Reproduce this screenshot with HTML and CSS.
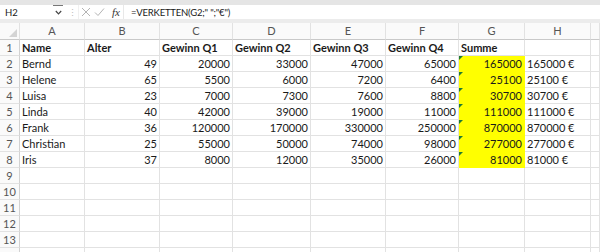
FILE: index.html
```html
<!DOCTYPE html>
<html>
  <head>
    <meta charset="utf-8">
    <title>Mappe1 - Excel</title>
    <link rel="stylesheet" href="styles.css">
  </head>
  <body>
    <div class="ribbon-edge"></div>
    <div class="formula-bar">
      <div class="name-box">
        <span class="ref">H2</span>
        <span class="drop">
          <svg width="7" height="5" viewBox="0 0 7 5"><polyline points="0.8,1 3.5,3.8 6.2,1" fill="none" stroke="#444" stroke-width="1.2"/></svg>
        </span>
      </div>
      <div class="grip">&#8942;</div>
      <div class="fx-buttons">
        <svg class="icon" width="10" height="10" viewBox="0 0 10 10"><path d="M1 1L9 9M9 1L1 9" stroke="#b4b4b4" stroke-width="1"/></svg>
        <svg class="icon" width="11" height="10" viewBox="0 0 11 10"><polyline points="1,5.5 4,8.5 10,1.5" fill="none" stroke="#b4b4b4" stroke-width="1"/></svg>
        <span class="fx">fx</span>
      </div>
      <div class="formula">=VERKETTEN(G2;" ";"€")</div>
    </div>
    <div class="bar-gap"></div>

    <div class="sheet">
      <div class="row head">
        <div class="corner"></div>
        <div>A</div><div>B</div><div>C</div><div>D</div><div>E</div><div>F</div><div>G</div><div>H</div><div></div>
      </div>
      <div class="row bold">
        <div class="rn">1</div>
        <div>Name</div><div>Alter</div><div>Gewinn Q1</div><div>Gewinn Q2</div><div>Gewinn Q3</div><div>Gewinn Q4</div><div>Summe</div><div></div><div></div>
      </div>
      <div class="row">
        <div class="rn">2</div>
        <div>Bernd</div><div class="n">49</div><div class="n">20000</div><div class="n">33000</div><div class="n">47000</div><div class="n">65000</div><div class="n y">165000</div><div>165000 €</div><div></div>
      </div>
      <div class="row">
        <div class="rn">3</div>
        <div>Helene</div><div class="n">65</div><div class="n">5500</div><div class="n">6000</div><div class="n">7200</div><div class="n">6400</div><div class="n y">25100</div><div>25100 €</div><div></div>
      </div>
      <div class="row">
        <div class="rn">4</div>
        <div>Luisa</div><div class="n">23</div><div class="n">7000</div><div class="n">7300</div><div class="n">7600</div><div class="n">8800</div><div class="n y">30700</div><div>30700 €</div><div></div>
      </div>
      <div class="row">
        <div class="rn">5</div>
        <div>Linda</div><div class="n">40</div><div class="n">42000</div><div class="n">39000</div><div class="n">19000</div><div class="n">11000</div><div class="n y">111000</div><div>111000 €</div><div></div>
      </div>
      <div class="row">
        <div class="rn">6</div>
        <div>Frank</div><div class="n">36</div><div class="n">120000</div><div class="n">170000</div><div class="n">330000</div><div class="n">250000</div><div class="n y">870000</div><div>870000 €</div><div></div>
      </div>
      <div class="row">
        <div class="rn">7</div>
        <div>Christian</div><div class="n">25</div><div class="n">55000</div><div class="n">50000</div><div class="n">74000</div><div class="n">98000</div><div class="n y">277000</div><div>277000 €</div><div></div>
      </div>
      <div class="row">
        <div class="rn">8</div>
        <div>Iris</div><div class="n">37</div><div class="n">8000</div><div class="n">12000</div><div class="n">35000</div><div class="n">26000</div><div class="n y">81000</div><div>81000 €</div><div></div>
      </div>
      <div class="row">
        <div class="rn">9</div>
        <div></div><div></div><div></div><div></div><div></div><div></div><div></div><div></div><div></div>
      </div>
      <div class="row">
        <div class="rn">10</div>
        <div></div><div></div><div></div><div></div><div></div><div></div><div></div><div></div><div></div>
      </div>
      <div class="row">
        <div class="rn">11</div>
        <div></div><div></div><div></div><div></div><div></div><div></div><div></div><div></div><div></div>
      </div>
      <div class="row">
        <div class="rn">12</div>
        <div></div><div></div><div></div><div></div><div></div><div></div><div></div><div></div><div></div>
      </div>
      <div class="row">
        <div class="rn">13</div>
        <div></div><div></div><div></div><div></div><div></div><div></div><div></div><div></div><div></div>
      </div>
      <div class="row">
        <div class="rn"></div>
        <div></div><div></div><div></div><div></div><div></div><div></div><div></div><div></div><div></div>
      </div>
    </div>
  </body>
</html>
```

FILE: styles.css
```css
body {
  margin:0;
  overflow:hidden;
  background:#fff;
  color:#1a1a1a;
  font-family:Lato, "Liberation Sans", sans-serif;
}
.ribbon-edge {
  height:5px;
  background:#e5e5e5;
}
.formula-bar {
  display:flex;
  align-items:center;
  height:14px;
  background:#fff;
  font-size:9.5px;
}
.name-box {
  width:66px;
  height:100%;
  box-sizing:border-box;
  display:flex;
  align-items:center;
  justify-content:space-between;
  padding-left:5px;
}
.drop {
  width:10px;
  height:100%;
  box-sizing:border-box;
  border-top:1px solid #777;
  display:flex;
  align-items:center;
  justify-content:center;
  margin-right:3px;
}
.grip {
  width:12px;
  text-align:center;
  color:#bbb;
  font-size:9px;
}
.fx-buttons {
  width:46px;
  height:100%;
  box-sizing:border-box;
  display:flex;
  align-items:center;
  gap:3px;
  padding-left:2px;
  border-left:1px solid #f0f0f0;
  border-right:1px solid #e8e8e8;
}
.fx {
  font-family:"Liberation Serif", serif;
  font-style:italic;
  font-size:11px;
  color:#333;
  margin-left:4px;
}
.formula {
  padding-left:7px;
  letter-spacing:-0.2px;
}
.bar-gap {
  height:4px;
  background:#ececec;
}

.row {
  display:grid;
  grid-template-columns:20px 65px 75px 73px 78px 75px 73px 66px 66px 1fr;
  height:16px;
  font-size:11px;
}
.row > div {
  box-sizing:border-box;
  border-right:1px solid #e2e2e2;
  border-bottom:1px solid #e2e2e2;
  line-height:15px;
  padding:0 2px;
  white-space:nowrap;
}
.bold {
  font-weight:bold;
}
.n {
  text-align:right;
}
.y {
  position:relative;
  background:#ffff00;
  border-right-color:#ffff00 !important;
  border-bottom-color:#ffff00 !important;
}
.y::before {
  content:"";
  position:absolute;
  left:0;
  top:0;
  border-top:4px solid #1f7a34;
  border-right:4px solid transparent;
}

.head {
  height:17px;
}
.head > div {
  background:#fafafa;
  color:#555;
  text-align:center;
  line-height:16px;
  border-bottom-color:#c9c9c9;
}
.corner {
  position:relative;
}
.corner::after {
  content:"";
  position:absolute;
  right:2px;
  bottom:2px;
  border-bottom:8px solid #d4d4d4;
  border-left:8px solid transparent;
}
.rn {
  background:#fafafa;
  color:#555;
  text-align:center;
  font-weight:normal;
  border-right-color:#d2d2d2 !important;
  padding:0 !important;
}
```
